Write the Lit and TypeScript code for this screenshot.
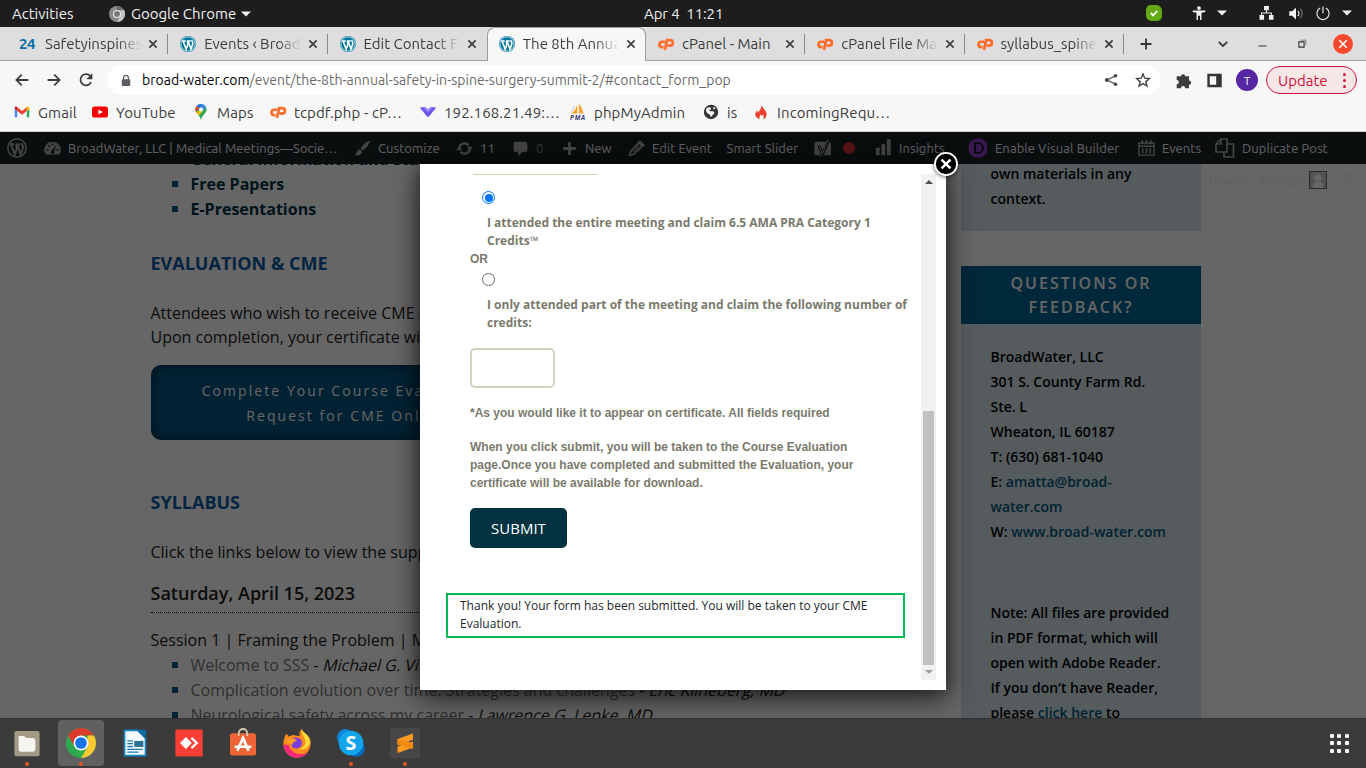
import { LitElement, html, svg, css, TemplateResult } from "lit";
import { customElement, property } from "lit/decorators.js";

const wpMark = (ring: string, fill: string) => svg`
  <circle cx="10" cy="10" r="10" fill=${fill}/>
  <circle cx="10" cy="10" r="8.900" fill="none" stroke=${ring} stroke-width=".9"/>
  <path d="M2.600 6.300h4.600M8.600 6.300h4.800M4 6.500l3.700 10 2.400-6.800-1.200-3M10.200 6.500l3.500 10 2.200-6.300c.9-2.600-1.400-3.200-1-5.200" fill="none" stroke=${ring} stroke-width="2"/>`;

const ICONS: Record<string, TemplateResult> = {
  wp: svg`${wpMark("#fff", "#00749c")}`,
  cp: svg`<g fill="none" stroke="#ff6c2c" stroke-width="3.400"><path d="M9 7.200H5.200a3.300 3.300 0 0 0 0 6.600h1.600"/><path d="M8.600 17.600 11.300 5.200h3.900a3.300 3.300 0 0 1 0 6.800h-3.400"/></g>`,
  gmail: svg`<path d="M1 16.500V5l3 2.400v9.100z" fill="#4285f4"/><path d="M16 7.400 19 5v11.500h-3z" fill="#34a853"/><path d="M4 3.900l6 4.800 6-4.800v4.700l-6 4.700-6-4.700z" fill="#ea4335"/><path d="M1 5c0-2 2-2.300 3-1.100v4.700L1 6.300z" fill="#c5221f"/><path d="M19 5c0-2-2-2.300-3-1.100v4.700l3-2.300z" fill="#fbbc04"/>`,
  youtube: svg`<rect x="0" y="3" width="20" height="14" rx="3.400" fill="#f00"/><path d="M8 6.800v6.400l5.600-3.200z" fill="#fff"/>`,
  maps: svg`<path d="M10 0a7 7 0 0 0-7 7c0 5 5 6 7 13 2-7 7-8 7-13a7 7 0 0 0-7-7z" fill="#34a853"/><path d="M10 0a7 7 0 0 0-5.400 2.500L8 5.400 12.400.400z" fill="#1a73e8"/><path d="M4.600 2.500A7 7 0 0 0 3.600 10L8 5.400z" fill="#ea4335"/><path d="M3.600 10 8 8.800l4 .2-4.800 5.300z" fill="#fbbc04"/><path d="M12.400.400A7 7 0 0 1 16.200 4L12 8.800 8 5.400z" fill="#4285f4"/><circle cx="10" cy="7" r="2.500" fill="#fff"/>`,
  vee: svg`<path d="M1 4h6l3 3 3-3h6c.8 0 .8 1 .3 1.700l-7.800 9.600a2 2 0 0 1-3 0L.700 5.700C.200 5 .200 4 1 4z" fill="#6f52ee"/><path d="m7 4 3 3 3-3 2 2-5 4.500L5 6z" fill="#9b86f7"/>`,
  pma: svg`<path d="M9 1v11H2c3-2 6-6 7-11z" fill="#f89c0e"/><path d="M11 0c4 3 5 8 6 12h-6z" fill="#f5a63c"/><path d="M6 3 1 12" stroke="#bbb"/><text x="0" y="19.500" font-size="8" font-weight="700" font-style="italic" font-family="Open Sans" fill="#383d74" textLength="19">PMA</text>`,
  globe: svg`<circle cx="10" cy="10" r="9" fill="#333"/><path d="M4 6c3-3 5-2 6-1s-1 2-2 3 2 1 4 1 3 3 1 4-2 3-4 3c1-3-2-3-3-4S3 9 4 6zM13 3l3 3-3 1z" fill="#f7f7f7"/>`,
  flame: svg`<path d="M10 1c1 4 7 6 7 12a6.500 6.500 0 0 1-5 6c2-2 2-4 0-6 0 2-2 2-2 0-2 2-3 4-1 6-4-1-7-3-6-7 .3-2 2-3 2-4 1 1 1 2 1 3 2-2 5-5 4-10z" fill="#ee3f2e"/>`,
  back: svg`<path d="M18 10H3.500M9.800 3.200 3 10l6.800 6.800" fill="none" stroke="#3c3c3c" stroke-width="2.200"/>`,
  forward: svg`<path d="M2 10h14.500M10.200 3.200 17 10l-6.800 6.800" fill="none" stroke="#3c3c3c" stroke-width="2.200"/>`,
  reload: svg`<path d="M16.500 12.500A7 7 0 1 1 16 5.800" fill="none" stroke="#3c3c3c" stroke-width="2.200"/><path d="M18 1.500V9h-7.500z" fill="#3c3c3c"/>`,
  lock: svg`<rect x="3" y="8" width="14" height="11" rx="1.500" fill="#5a5d61"/><path d="M6 9V5.500a4 4 0 0 1 8 0V9" fill="none" stroke="#5a5d61" stroke-width="2"/>`,
  share: svg`<path d="M17 4 4 10l13 6" fill="none" stroke="#444" stroke-width="1.700"/><circle cx="16.500" cy="4" r="2.500" fill="#444"/><circle cx="4" cy="10" r="2.700" fill="#444"/><circle cx="16.500" cy="16" r="2.500" fill="#444"/>`,
  star: svg`<path d="m10 2.500 2.200 5.200 5.700.500-4.300 3.800 1.300 5.500-4.900-2.900-4.900 2.900L6.400 12 2.100 8.200l5.700-.5z" fill="none" stroke="#444" stroke-width="1.800"/>`,
  puzzle: svg`<path d="M2 5h5a2.500 2.500 0 1 1 5 0h4.500v5a2.500 2.500 0 1 1 0 5v4H12a2.500 2.500 0 0 0-5 0H2v-4.500a2.500 2.500 0 0 0 0-5z" fill="#3c3c3c"/>`,
  panel: svg`<path d="M3 3.500h14v13H3z" fill="none" stroke="#333" stroke-width="2.800"/><path d="M12 3h6v14h-6z" fill="#333"/>`,
  close: svg`<path d="m4 4 12 12M16 4 4 16" stroke="#3c3c3c" stroke-width="2.800"/>`,
  plus: svg`<path d="M10 1v18M1 10h18" stroke="#333" stroke-width="3"/>`,
  chevron: svg`<path d="m3 6.500 7 7 7-7" fill="none" stroke="#333" stroke-width="3"/>`,
  min: svg`<path d="M1 15.500h18" stroke="#333" stroke-width="2.200"/>`,
  restore: svg`<path d="M2 6.500h11.500V18H2z" fill="none" stroke="#333" stroke-width="2.500"/><path d="M6 2.500h11.500V14" fill="none" stroke="#777" stroke-width="2"/>`,
  winclose: svg`<circle cx="10" cy="10" r="10" fill="#f8492d"/><path d="m6.300 6.300 7.400 7.400M13.700 6.300l-7.400 7.400" stroke="#fff" stroke-width="1.600"/>`,
  chromeGray: svg`<circle cx="10" cy="10" r="10" fill="#8a8a8a"/><path d="M10 0a10 10 0 0 1 8.700 5H10z" fill="#6c6c6c"/><path d="M18.700 5A10 10 0 0 1 10 20l4.300-7.500L14.300 5z" fill="#c4c4c4"/><circle cx="10" cy="10" r="5" fill="#eee"/><circle cx="10" cy="10" r="3.700" fill="#777"/>`,
  tri: svg`<path d="M0 5h20L10 15z" fill="#f2f2f2"/>`,
  shield: svg`<path d="M6 0h7a7 7 0 0 1 7 7v7a6 6 0 0 1-6 6H7a7 7 0 0 1-7-7V6a6 6 0 0 1 6-6z" fill="#62a914"/><path d="m6 10 3 3 5-5.500" fill="none" stroke="#fff" stroke-width="2.300"/>`,
  person: svg`<g fill="#f2f2f2"><circle cx="10" cy="3" r="2.700"/><path d="M1 6.500h18v2.200l-5.500 1V20h-2v-6H8.500v6h-2V9.700L1 8.700z"/></g>`,
  net: svg`<g fill="#f2f2f2"><path d="M6.500 0h7v6h-7zM0 13h6.500v6.500H0zM13.500 13H20v6.500h-6.500z"/><path d="M10 6v4M3 13v-3h14v3" fill="none" stroke="#f2f2f2" stroke-width="1.500"/></g>`,
  sound: svg`<path d="M1 7h4l5-5v16l-5-5H1z" fill="#f2f2f2"/><path d="M12.500 6.500a5 5 0 0 1 0 7" fill="none" stroke="#f2f2f2" stroke-width="1.700"/><path d="M15.500 3.500a9 9 0 0 1 0 13" fill="none" stroke="#777" stroke-width="1.500"/>`,
  power: svg`<path d="M6 2.300a8.700 8.700 0 1 0 8 0M10 0v9.500" fill="none" stroke="#f2f2f2" stroke-width="1.600"/>`,
  wpBar: svg`${wpMark("#a7aaad", "#1d2327")}<circle cx="10" cy="10" r="9.300" fill="none" stroke="#a7aaad" stroke-width="1.200"/>`,
  gauge: svg`<path d="M10 2.500A9 9 0 0 0 2.300 17h15.400A9 9 0 0 0 10 2.500z" fill="#a7aaad"/><g fill="#1d2327"><circle cx="4.300" cy="11.500" r="1.200"/><circle cx="6" cy="7" r="1.200"/><circle cx="10" cy="5.300" r="1.200"/><circle cx="15.700" cy="11.500" r="1.200"/><path d="m14.700 5.500-2.600 7.300a2.200 2.200 0 1 1-2.600-1z"/></g>`,
  brush: svg`<path d="M18.500 1C14 2 9.500 6.500 8 10l2.400 2.300C14.300 10 18 5.500 18.500 1zM7 11c-3.500 0-2.500 4.500-6 6 3 2.500 8.500.500 8.300-3.500z" fill="#a7aaad"/>`,
  refresh: svg`<path d="M3.800 10a6.200 6.200 0 0 1 11-3.800M16.200 10a6.200 6.200 0 0 1-11 3.800" fill="none" stroke="#a7aaad" stroke-width="2.600"/><path d="M12.800 7.800H20L16.400 12zM7.200 12.200H0L3.600 8z" fill="#a7aaad"/>`,
  comment: svg`<path d="M4 2h12a2 2 0 0 1 2 2v8a2 2 0 0 1-2 2h-4l-5 5v-5H4a2 2 0 0 1-2-2V4a2 2 0 0 1 2-2z" fill="#a7aaad"/>`,
  plusBar: svg`<path d="M10 2.500v15M2.500 10h15" stroke="#a7aaad" stroke-width="3.400"/>`,
  pencil: svg`<path d="m13 3 4 4L6.500 17 2 18l1-4.500z" fill="none" stroke="#a7aaad" stroke-width="2"/><path d="m12 3 2-2 5 5-2 2zM6 14l7-7" fill="#a7aaad" stroke="#a7aaad" stroke-width="1.200"/>`,
  yoast: svg`<path d="M3.500 2H17a3 3 0 0 1 3 3v13H.5V5a3 3 0 0 1 3-3z" fill="#a7aaad"/><path d="M17.500-.500 10.500 15.500c-1 2.500-2 3.500-4.500 3.500M5.500 6.500 9.600 15" fill="none" stroke="#1d2327" stroke-width="3.600"/><path d="M16.500-.500 10.200 15.500c-1 2.500-2 3.300-4.200 3.300M5.500 6.500 9.600 15" fill="none" stroke="#a7aaad" stroke-width="1.200"/>`,
  bars: svg`<path d="M1 9h4.500v9H1zM7.500 5H12v13H7.500zM14-1h4.500v19H14z" fill="#a7aaad"/>`,
  divi: svg`<circle cx="10" cy="10" r="9.600" fill="#8c3fce"/><path d="M7 5h3a5 5 0 0 1 0 10H7z" fill="none" stroke="#1d1830" stroke-width="2.200"/>`,
  calendar: svg`<path d="M1 3.500h18v14.300H1zM1 7.300h18" fill="none" stroke="#a7aaad" stroke-width="1.700"/><path d="M5 0v5M10 0v5M15 0v5M5.500 9.500v6M10 9.500v6M14.500 9.500v6" stroke="#a7aaad" stroke-width="1.800"/>`,
  copy: svg`<path d="M6 1h6v13H1V6zM6 1v5H1M12 6h6.500v13H9v-5" fill="none" stroke="#a7aaad" stroke-width="1.700"/>`,
  avatar: svg`<path d="M.600.600h18.800v18.800H.600z" fill="#cdcdcd" stroke="#6b6b6b" stroke-width="1.200"/><circle cx="10" cy="7.500" r="4" fill="#fff"/><path d="M4 19c0-6 3-7 6-7s6 1 6 7z" fill="#fff"/>`,
  search: svg`<circle cx="8" cy="8" r="5.500" fill="none" stroke="#f0f3f7" stroke-width="2"/><path d="m12 12 6 6" stroke="#f0f3f7" stroke-width="2"/>`,
  popclose: svg`<circle cx="10" cy="10" r="9.200" fill="#000" stroke="#fff" stroke-width="1.500"/><path d="m6.300 6.300 7.400 7.400M13.700 6.300l-7.400 7.400" stroke="#fff" stroke-width="2.100"/>`,
  files: svg`<rect x="1" y="1.500" width="18" height="18" rx="1.500" fill="#a39b87"/><path d="M4 5h4l1.500 1.400H14A2 2 0 0 1 16 8v6.500a1.700 1.700 0 0 1-1.700 1.700H5.700A1.700 1.700 0 0 1 4 14.500z" fill="#f6f5f2"/>`,
  chrome: svg`<circle cx="10" cy="10" r="10" fill="#2da94f"/><path d="M1.340 5A10 10 0 0 1 18.660 5H10L5.700 12.500z" fill="#db3a2d"/><path d="M18.660 5A10 10 0 0 1 10 20l4.400-7.500L14.300 5z" fill="#fcc934"/><circle cx="10" cy="10" r="5" fill="#fff"/><circle cx="10" cy="10" r="3.900" fill="#1a73e8"/>`,
  writer: svg`<path d="M2.500 1h9.500l5.500 5.500V19h-15z" fill="#f4fafd" stroke="#1385c0" stroke-width="1.200"/><path d="M11 .5h7v7z" fill="#0e6aa3"/><path d="M4.500 8.500h4M4.500 10.500h4M4.500 12.500h4M4.500 14.500h11M4.500 16.500h8" stroke="#1a7bb0" stroke-width=".9"/><path d="M9.500 8.500H16v4.300H9.500z" fill="#2c6f94"/>`,
  anydesk: svg`<rect x=".3" y=".3" width="19.400" height="19.400" rx="1" fill="#fb3f36"/><path d="m7.800 5.800 4.200 4.200-4.200 4.200L3.600 10z" fill="#fff"/><path d="m11.800 6.300 3.700 3.700-3.700 3.700" fill="none" stroke="#fff" stroke-width="1.700"/>`,
  store: svg`<rect x=".7" y="3" width="18.600" height="16" rx="1.700" fill="#ef6436"/><path d="M7 5V3a3 3 0 0 1 6 0v2" fill="none" stroke="#d9c7ae" stroke-width="1.300"/><path d="m6 15.500 4-9 4 9M4 12.700h12" fill="none" stroke="#fff" stroke-width="1.900"/>`,
  firefox: svg`<path d="M10 20.500A9.800 9.800 0 0 1 .300 10.300c0-2.500.800-5 2.300-7l1.400 2 3-1c2 0 3 1 5 .500C11.500 3 12 1 13.500 0c0 3 6 4 6.300 9.500C20 16 15 20.500 10 20.500z" fill="#ff8a1c"/><path d="M13.500 0c-1 4 2.500 5 2.500 10-1 3-3 4-5 4 4 2 8-1 8.300-4.500C19.500 4 14 3 13.500 0z" fill="#ffd93b"/><path d="M.5 11c0 5 4 9.500 9.500 9.500 3.500 0 6.500-1.500 8-4-4 3-12 2-14-5z" fill="#f5287b"/><circle cx="9.500" cy="10" r="4" fill="#7a3ee0"/><path d="M2 8c3-2 5-1.500 8 0-1 1-3 1-3 3-3 0-4-1-5-3z" fill="#ff9d27"/>`,
  skype: svg`<circle cx="6" cy="6" r="6" fill="#0a84d6"/><circle cx="14" cy="14" r="6" fill="#0568b5"/><circle cx="10" cy="10" r="8.800" fill="#12a5ea"/><text x="10" y="15.200" text-anchor="middle" font-size="14" font-weight="700" font-family="Open Sans" fill="#fff">S</text>`,
  sublime: svg`<rect width="20" height="20" rx="1" fill="#474747"/><path d="M5 7.300 15.300 3.700v4.100L5 11.300zM5 16.600v-4.100L15.300 9v4z" fill="#ff9a1f"/><path d="m5 7.300 10.300 2.600V14L5 11.300z" fill="#f08a12"/>`,
};

@customElement("ui-icon")
class UiIcon extends LitElement {
  @property() name = "";
  static styles = css`
    :host { display: inline-flex; width: 16px; height: 16px; flex: none; }
    svg { width: 100%; height: 100%; overflow: visible; display: block; }
  `;
  render() {
    return html`<svg viewBox="0 0 20 20">${ICONS[this.name]}</svg>`;
  }
}

const ui = css`
  :host { font-family: Ubuntu, "Open Sans", sans-serif; }
  * { box-sizing: border-box; }
`;

@customElement("desktop-bar")
class DesktopBar extends LitElement {
  static styles = [ui, css`
    :host { display: grid; grid-template-columns: 109px 535px 502px 1fr; align-items: center; height: 27px; background: #1d1d1d; color: #f2f2f2; font-size: 15px; line-height: 17px; white-space: nowrap; }
    .act { padding-left: 12px; }
    .app { display: flex; align-items: center; gap: 6px; }
    .app .t { width: 10px; height: 10px; margin-left: -1px; }
    .clock { white-space: pre; padding-bottom: 1px; letter-spacing: -.1px; }
    .tray { display: flex; align-items: center; padding-bottom: 1px; }
    .a { margin-left: 30px; width: 14px; height: 14px; }
    .b { margin-left: 11px; width: 10px; height: 10px; }
    .c { margin-left: 32px; width: 15px; height: 14px; }
    .d { margin-left: 14px; width: 16px; height: 15px; }
    .e { margin-left: 12px; width: 14px; height: 15px; }
    .f { margin-left: 12px; width: 10px; height: 10px; }
  `];
  render() {
    return html`
      <span class="act">Activities</span>
      <span class="app"><ui-icon name="chromeGray"></ui-icon><span>Google Chrome</span><ui-icon class="t" name="tri"></ui-icon></span>
      <span class="clock">Apr 4  11:21</span>
      <span class="tray">
        <ui-icon name="shield"></ui-icon><ui-icon class="a" name="person"></ui-icon><ui-icon class="b" name="tri"></ui-icon>
        <ui-icon class="c" name="net"></ui-icon><ui-icon class="d" name="sound"></ui-icon><ui-icon class="e" name="power"></ui-icon><ui-icon class="f" name="tri"></ui-icon>
      </span>`;
  }
}

const TABS = [
  ["24", "Safetyinspinesurgery"], ["wp", "Events ‹ BroadWater"], ["wp", "Edit Contact Form"],
  ["wp", "The 8th Annual Safety"], ["cp", "cPanel - Main"], ["cp", "cPanel File Manager"], ["cp", "syllabus_spine"],
];
const MARKS = [
  ["gmail", "Gmail"], ["youtube", "YouTube"], ["maps", "Maps"], ["cp", "tcpdf.php - cP…"], ["vee", "192.168.21.49:…"],
  ["pma", "phpMyAdmin"], ["globe", "is"], ["flame", "IncomingRequ…"],
];

@customElement("browser-chrome")
class BrowserChrome extends LitElement {
  static styles = [ui, css`
    :host { display: grid; grid-template-rows: 34px 38px 33px; height: 105px; background: #f7f7f7; color: #3c3c3c; white-space: nowrap; }
    .strip { display: flex; align-items: stretch; padding-left: 9px; background: #dedede; border-bottom: 1px solid #9c9c9c; }
    .tab { display: flex; align-items: center; width: 159.250px; padding: 0 9px 0 12px; font-size: 15px; position: relative; }
    .tab.sep::after { content: ""; position: absolute; right: 0; top: 7px; width: 1px; height: 20px; background: #8c8c8c; }
    .tab.on { background: #f7f7f7; border: 1px solid #9c9c9c; border-bottom: 0; border-radius: 8px 8px 0 0; margin-bottom: -1px; padding: 0 8px 2px 11px; }
    .tab .n { font-weight: 700; color: #0a72a8; width: 18px; margin-left: -2px; letter-spacing: -.5px; }
    .tab .l { flex: 1; margin-left: 8px; overflow: hidden; -webkit-mask-image: linear-gradient(to right, #000 76%, transparent 100%); mask-image: linear-gradient(to right, #000 76%, transparent 100%); }
    .tab.full .l { -webkit-mask-image: none; mask-image: none; }
    .tab .x { width: 12px; height: 12px; margin-left: 6px; }
    .new { width: 12px; height: 12px; margin: 11px 0 0 16px; }
    .win { display: flex; align-items: center; margin-left: auto; padding-right: 13px; }
    .w1 { width: 12px; height: 12px; margin-right: 29px; }
    .w2 { width: 9px; height: 9px; margin-right: 31px; }
    .w3 { width: 9px; height: 9px; margin-right: 26px; }
    .w4 { width: 20px; height: 20px; }
    .tools { display: flex; align-items: center; padding-left: 14px; }
    .tools .nv { margin-right: 16px; }
    .url { display: flex; align-items: center; width: 1054px; height: 30px; margin-left: -3px; padding: 0 10px 0 13px; background: #fff; border-radius: 15px; font-size: 14px; color: #6a6a6a; }
    .url .lock { width: 12px; height: 13px; margin-right: 10px; }
    .url .addr { flex: 1; letter-spacing: .025px; }
    .url .dom { color: #000; }
    .url .share { width: 14px; height: 14px; margin-right: 17px; }
    .url .star { width: 16px; height: 16px; }
    .ext { width: 17px; height: 17px; margin-left: 14px; }
    .side { width: 17px; height: 17px; margin-left: 14px; }
    .me { width: 22px; height: 22px; margin-left: 13px; border-radius: 50%; background: #5527a3; color: #fff; font-size: 12px; display: flex; align-items: center; justify-content: center; }
    .upd { display: flex; align-items: center; justify-content: space-between; width: 91px; height: 28px; margin-left: 8px; padding: 0 10px 0 11px; border: 1px solid #d0103a; border-radius: 14px; background: #f5e7e6; color: #d0103a; font-size: 15px; }
    .dots { display: grid; gap: 3px; }
    .dots i { width: 3px; height: 3px; border-radius: 50%; background: #d0103a; }
    .marks { display: grid; grid-template-columns: 78px 101px 77px 150px 150px 133px 50px 1fr; align-items: center; padding: 0 0 6px 14px; border-bottom: 1px solid #cfcfcf; font-size: 15px; }
    .mark { display: flex; align-items: center; gap: 8px; letter-spacing: .12px; }
  `];
  render() {
    return html`
      <div class="strip">
        ${TABS.map(([ic, t], i) => html`<div class="tab ${i === 3 ? "on" : ""} ${i === 4 ? "full" : ""} ${i !== 2 && i !== 3 ? "sep" : ""}">
          ${ic === "24" ? html`<span class="n">24</span>` : html`<ui-icon name=${ic}></ui-icon>`}
          <span class="l">${t}</span><ui-icon class="x" name="close"></ui-icon></div>`)}
        <ui-icon class="new" name="plus"></ui-icon>
        <div class="win"><ui-icon class="w1" name="chevron"></ui-icon><ui-icon class="w2" name="min"></ui-icon><ui-icon class="w3" name="restore"></ui-icon><ui-icon class="w4" name="winclose"></ui-icon></div>
      </div>
      <div class="tools">
        <ui-icon class="nv" name="back"></ui-icon><ui-icon class="nv" name="forward"></ui-icon><ui-icon class="nv" name="reload"></ui-icon>
        <div class="url"><ui-icon class="lock" name="lock"></ui-icon><span class="addr"><span class="dom">broad-water.com</span>/event/the-8th-annual-safety-in-spine-surgery-summit-2/#contact_form_pop</span><ui-icon class="share" name="share"></ui-icon><ui-icon class="star" name="star"></ui-icon></div>
        <ui-icon class="ext" name="puzzle"></ui-icon><ui-icon class="side" name="panel"></ui-icon>
        <span class="me">T</span>
        <span class="upd">Update<span class="dots"><i></i><i></i><i></i></span></span>
      </div>
      <div class="marks">${MARKS.map(([ic, t]) => html`<span class="mark"><ui-icon name=${ic}></ui-icon><span>${t}</span></span>`)}</div>`;
  }
}

@customElement("admin-bar")
class AdminBar extends LitElement {
  static styles = [ui, css`
    :host { display: block; position: relative; z-index: 1; color: #f0f0f1; font-size: 13px; white-space: nowrap; }
    .bar { display: grid; grid-template-columns: 37px 310px 102px 56px 49px 67px 98px 88px 61px 93px 170px 77px 1fr; height: 32px; align-items: center; padding-left: 7px; background: #1d2327; }
    .it { display: flex; align-items: center; gap: 7px; letter-spacing: .08px; }
    .it ui-icon { width: 17px; height: 17px; }
    .it .big { width: 20px; height: 20px; }
    .dim { color: #85888b; }
    .dot { width: 12px; height: 12px; border-radius: 50%; background: #dc3232; margin-left: 5px; }
    .site { letter-spacing: .08px; }
    .sl { padding-left: .5px; }
    .me { position: absolute; top: 39px; left: 1209px; display: flex; align-items: center; letter-spacing: .25px; }
    .me .av { width: 18px; height: 18px; margin: 0 16px 0 3px; }
    .me .s { width: 14px; height: 14px; }
  `];
  render() {
    const it = (n: string, t = "", c = "") => html`<span class="it ${c}">${n ? html`<ui-icon class=${["wpBar", "divi", "copy"].includes(n) ? "big" : ""} name=${n}></ui-icon>` : ""}<span>${t}</span></span>`;
    return html`<div class="bar">
      ${it("wpBar")}${it("gauge", "BroadWater, LLC | Medical Meetings—Socie…", "site")}${it("brush", "Customize")}${it("refresh", "11")}${it("comment", "0", "dim")}${it("plusBar", "New")}${it("pencil", "Edit Event")}${it("", "Smart Slider", "sl")}
      <span class="it"><ui-icon name="yoast"></ui-icon><i class="dot"></i></span>
      ${it("bars", "Insights")}${it("divi", "Enable Visual Builder")}${it("calendar", "Events")}${it("copy", "Duplicate Post")}
    </div>
    <div class="me"><span>Howdy, Rodrigo</span><ui-icon class="av" name="avatar"></ui-icon><ui-icon class="s" name="search"></ui-icon></div>`;
  }
}

@customElement("event-page")
class EventPage extends LitElement {
  static styles = css`
    :host { display: flex; margin-top: -17px; font: 16px/24px "Open Sans", sans-serif; color: #222; white-space: nowrap; }
    * { box-sizing: border-box; }
    main { width: 961px; flex: none; padding-left: 150.500px; }
    ul { margin: 0; padding: 0 0 0 40px; list-style: none; line-height: 25px; }
    li { position: relative; }
    li::before { content: ""; position: absolute; left: -18.500px; top: 9px; width: 6px; height: 6px; background: #00587f; }
    .bold li { font-weight: 700; color: #003345; }
    .talks { color: #777; }
    .talks em { display: inline-block; color: #222; font-style: normal; transform: skewX(-14deg); padding-left: .5px; }
    .talks b { color: #222; font-weight: 400; }
    h2 { margin: 0; font-size: 18px; line-height: 25px; color: #0b5aa5; font-weight: 700; }
    .ev { margin-top: 29px; }
    p { margin: 25px 0 0; }
    .btn { width: 392px; height: 75px; margin-top: 16px; padding: 13px 0; border-radius: 10px; background: #005681; box-shadow: inset 0 0 12px rgba(0,0,0,.55); color: #fff; font-size: 14px; line-height: 25px; letter-spacing: 2.060px; text-align: center; }
    .sy { margin-top: 50px; }
    h3 { margin: 17px 0 0; width: 640px; height: 32px; font-size: 18px; line-height: 25px; font-weight: 600; border-bottom: 1px dotted #000; color: #222; }
    .ss { margin-top: 15px; line-height: 25px; }
    aside { width: 240px; flex: none; font-size: 14px; font-weight: 600; line-height: 25px; color: #000; }
    .card { background: #d7e4e9; padding-left: 29.500px; }
    .one { height: 84px; padding-top: 14px; }
    .head { margin-top: 35px; height: 58px; padding-top: 5px; background: #006593; color: #fff; text-align: center; font-size: 16px; line-height: 24px; letter-spacing: 2px; }
    .two { height: 420px; padding-top: 20px; }
    .gap { height: 56px; }
    a { color: #00587a; }
  `;
  render() {
    return html`
      <main>
        <ul class="bold"><li>General Information and Staff</li><li>Free Papers</li><li>E-Presentations</li></ul>
        <h2 class="ev">EVALUATION &amp; CME</h2>
        <p>Attendees who wish to receive CME credits<br>Upon completion, your certificate will be</p>
        <div class="btn">Complete Your Course Evaluation/<br>Request for CME Online</div>
        <h2 class="sy">SYLLABUS</h2>
        <p>Click the links below to view the supplied</p>
        <h3>Saturday, April 15, 2023</h3>
        <div class="ss">Session 1 | Framing the Problem | Moderator</div>
        <ul class="talks"><li>Welcome to SSS <b>-</b> <em>Michael G. Vitale, MD</em></li><li>Complication evolution over time: Strategies and challenges <b>-</b> <em>Eric Klineberg, MD</em></li><li>Neurological safety across my career <b>-</b> <em>Lawrence G. Lenke, MD</em></li></ul>
      </main>
      <aside>
        <div class="card one">own materials in any<br>context.</div>
        <div class="head">QUESTIONS OR<br>FEEDBACK?</div>
        <div class="card two">BroadWater, LLC<br>301 S. County Farm Rd.<br>Ste. L<br>Wheaton, IL 60187<br>T: (630) 681-1040<br>E: <a>amatta@broad-<br>water.com</a><br>W: <a>www.broad-water.com</a>
          <div class="gap"></div>Note: All files are provided<br>in PDF format, which will<br>open with Adobe Reader.<br>If you don’t have Reader,<br>please <a>click here</a> to</div>
      </aside>`;
  }
}

@customElement("form-dialog")
class FormDialog extends LitElement {
  static styles = css`
    :host { position: absolute; z-index: 3; left: 420px; top: 32px; width: 526px; height: 526px; padding: 10px; box-sizing: border-box; background: #fff; box-shadow: 0 10px 25px rgba(0,0,0,.5), 0 0 18px rgba(0,0,0,.5); display: flex; }
    * { box-sizing: border-box; }
    .form { flex: 1; min-width: 0; font: 700 12px/18px "Open Sans", sans-serif; color: #7a7a6c; white-space: nowrap; }
    .cut { width: 125px; height: 1px; margin-left: 43px; background: #d4d0ba; }
    .radio { width: 13px; height: 13px; margin-left: 52px; border: 1px solid #6b6b6b; border-radius: 50%; display: flex; align-items: center; justify-content: center; }
    .r1 { margin-top: 16px; border-color: #0075ff; }
    .r1::after { content: ""; width: 8px; height: 8px; flex: none; border-radius: 50%; background: #0075ff; }
    .lab { margin: 10px 0 0 57px; }
    .or { padding-left: 40px; }
    .or, .note { font-family: "Liberation Sans", sans-serif; }
    .r2 { margin-top: 5px; }
    .box { width: 85px; height: 40px; margin: 16px 0 0 40px; border: 2px solid #d4d0ba; border-radius: 5px; }
    .note { padding: 16px 0 0 40px; }
    .submit { width: 97px; height: 40px; margin: 16px 0 0 40px; border-radius: 5px; background: #003242; color: #fff; font-weight: 400; font-size: 15px; line-height: 41px; text-align: center; }
    .ok { width: 459px; height: 45px; margin: 45px 0 0 16px; padding: 2px 12px; border: 2px solid #00b956; color: #23282d; font-weight: 400; }
    .bar { width: 15px; flex: none; background: #f1f1f1; display: flex; flex-direction: column; align-items: center; }
    .up { border: 4px solid transparent; border-top: 0; border-bottom-color: #505050; margin-top: 6px; }
    .thumb { width: 11px; height: 254px; margin-top: 227px; background: #c1c1c1; }
    .down { border: 4px solid transparent; border-bottom: 0; border-top-color: #a0a0a0; margin-top: 5px; }
    .x { position: absolute; right: -12px; top: -12px; width: 24px; height: 24px; filter: drop-shadow(0 1px 2px rgba(0,0,0,.6)); }
  `;
  render() {
    return html`
      <div class="form">
        <div class="cut"></div>
        <div class="radio r1"></div>
        <div class="lab">I attended the entire meeting and claim 6.5 AMA PRA Category 1<br>Credits™</div>
        <div class="or">OR</div>
        <div class="radio r2"></div>
        <div class="lab">I only attended part of the meeting and claim the following number of<br>credits:</div>
        <div class="box"></div>
        <div class="note">*As you would like it to appear on certificate. All fields required</div>
        <div class="note">When you click submit, you will be taken to the Course Evaluation<br>page.Once you have completed and submitted the Evaluation, your<br>certificate will be available for download.</div>
        <div class="submit">SUBMIT</div>
        <div class="ok">Thank you! Your form has been submitted. You will be taken to your CME<br>Evaluation.</div>
      </div>
      <div class="bar"><i class="up"></i><i class="thumb"></i><i class="down"></i></div>
      <ui-icon class="x" name="popclose"></ui-icon>`;
  }
}

const DOCK = ["files", "chrome", "writer", "anydesk", "store", "firefox", "skype", "sublime"];

@customElement("app-dock")
class AppDock extends LitElement {
  static styles = css`
    :host { display: flex; align-items: center; height: 50px; background: #3b3b3b; border-top: 1px solid #313131; box-sizing: border-box; padding-bottom: 1px; }
    .slot { width: 46px; height: 46px; margin-left: 4px; margin-right: 4px; border-radius: 4px; display: grid; grid-template-rows: 42px 4px; justify-items: center; align-items: center; box-sizing: border-box; }
    .slot ui-icon { width: 28px; height: 28px; margin-top: 4px; }
    .slot .wide { width: 30px; height: 30px; }
    .on { background: #606060; }
    .dot { width: 4px; height: 4px; border-radius: 50%; background: #e95420; }
    .apps { margin-left: auto; margin-right: 17.500px; display: grid; grid-template-columns: repeat(3, 4px); gap: 3.500px; }
    .apps i { width: 4px; height: 4px; border-radius: 1px; background: #f4f4f4; }
  `;
  render() {
    return html`
      ${DOCK.map((n, i) => html`<div class="slot ${i === 1 ? "on" : ""}"><ui-icon class=${i === 1 || i === 7 ? "wide" : ""} name=${n}></ui-icon>${[0, 1, 6, 7].includes(i) ? html`<i class="dot"></i>` : ""}</div>`)}
      <div class="apps">${Array.from({ length: 9 }, () => html`<i></i>`)}</div>`;
  }
}

@customElement("app-root")
class AppRoot extends LitElement {
  static styles = css`
    :host { display: grid; grid-template-rows: 27px 105px 586px 50px; width: 1366px; height: 768px; overflow: hidden; }
    .view { position: relative; overflow: hidden; background: #fff; }
    .shade { position: absolute; inset: 0; z-index: 2; background: rgba(0,0,0,.6); }
  `;
  render() {
    return html`
      <desktop-bar></desktop-bar>
      <browser-chrome></browser-chrome>
      <div class="view">
        <admin-bar></admin-bar>
        <event-page></event-page>
        <div class="shade"></div>
        <form-dialog></form-dialog>
      </div>
      <app-dock></app-dock>`;
  }
}
